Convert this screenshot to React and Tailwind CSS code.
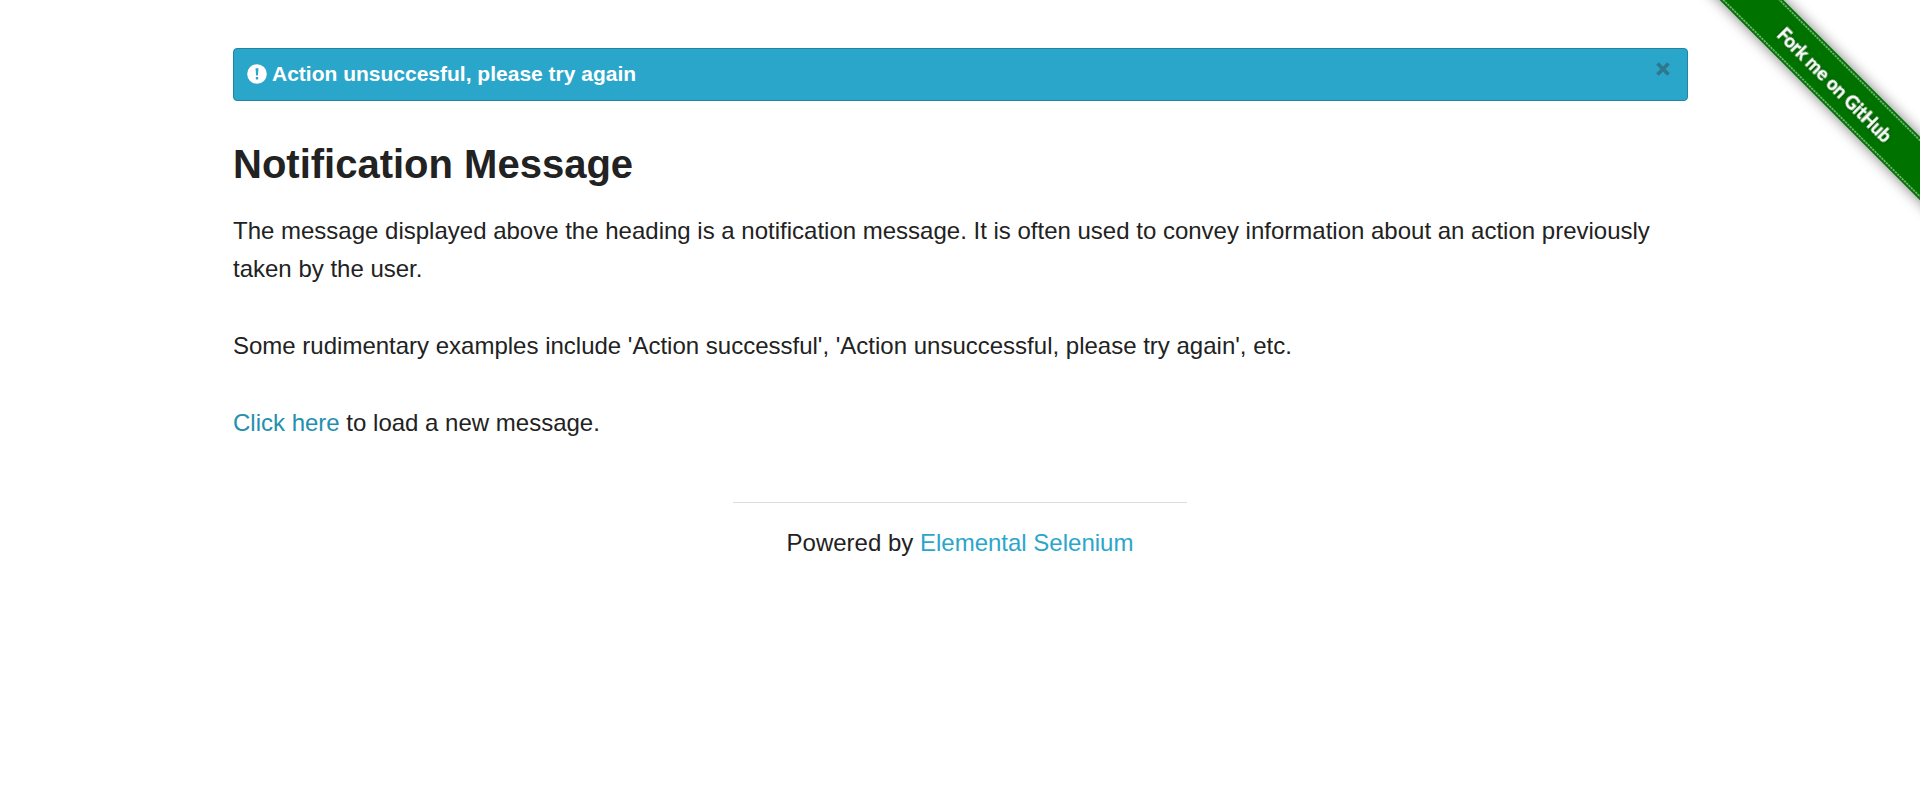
import React, { useState } from "react";

function AlertIcon() {
  return (
    <svg viewBox="0 0 20 20" className="h-5 w-5 shrink-0" aria-hidden="true">
      <circle cx="10" cy="10" r="9.8" fill="#fff" />
      <path d="M8.5 4.2h3l-.6 7.4H9.1z" fill="#2ba6cb" />
      <rect x="8.8" y="13" width="2.4" height="2.4" rx=".3" fill="#2ba6cb" />
    </svg>
  );
}

function CloseIcon() {
  return (
    <svg viewBox="0 0 14 14" className="h-3.5 w-3.5" aria-hidden="true">
      <path d="M1.5 1.5l11 11M12.5 1.5l-11 11" stroke="#333" strokeWidth="3.8" />
    </svg>
  );
}

function ForkRibbon() {
  return (
    <a href="#fork" aria-label="Fork me on GitHub" className="absolute top-0 right-0">
      <svg viewBox="0 0 224 224" className="block h-56 w-56">
        <defs>
          <filter id="ribbon-shadow" x="-20%" y="-60%" width="140%" height="220%">
            <feGaussianBlur stdDeviation="7" />
          </filter>
          <filter id="text-shadow" x="-20%" y="-60%" width="140%" height="220%">
            <feDropShadow dx="0" dy="0" stdDeviation="1.5" floodColor="#000" floodOpacity="0.5" />
          </filter>
        </defs>
        <g transform="translate(139.5 84) rotate(45)">
          <rect x="-200" y="-22.5" width="400" height="45" fill="#000" opacity="0.5" filter="url(#ribbon-shadow)" />
          <rect x="-200" y="-22.5" width="400" height="45" fill="#007200" />
          <path d="M-200-19.8h400M-200 19.8h400" stroke="#6ab06a" strokeWidth="1.8" strokeDasharray="2.4 .8" />
          <text y="8" textAnchor="middle" fill="#fff" stroke="#fff" strokeWidth=".3" fontFamily="Lato, sans-serif" fontSize="18" fontWeight="700" filter="url(#text-shadow)">
            Fork me on GitHub
          </text>
        </g>
      </svg>
    </a>
  );
}

export default function App() {
  const [open, setOpen] = useState(true);
  return (
    <div className="relative overflow-x-clip bg-white font-['Liberation_Sans',Arial,sans-serif] text-2xl text-[#222]">
      <ForkRibbon />
      <div className="mx-auto max-w-[1500px] pt-12 pr-[22px] pl-[23px]">
        {open && (
          <div role="alert" className="flex items-start justify-between rounded border border-[#2284a1] bg-[#2ba6cb] pt-[11px] pr-[15px] pb-3 pl-[13px] text-white">
            <p className="flex items-center gap-[5px] text-[21px] leading-7 font-bold">
              <AlertIcon />
              Action unsuccesful, please try again
            </p>
            <button type="button" aria-label="Close" onClick={() => setOpen(false)} className="p-0.5 opacity-40">
              <CloseIcon />
            </button>
          </div>
        )}
        <main>
          <h1 className="mt-[35px] mb-5 text-[40px] leading-[56px] font-bold">Notification Message</h1>
          <p className="leading-[38px]">
            The message displayed above the heading is a notification message. It is often used to convey information about an action previously taken by the user.
          </p>
          <p className="mt-[39px] leading-[38px]">
            Some rudimentary examples include 'Action successful', 'Action unsuccessful, please try again', etc.
          </p>
          <p className="mt-[39px] leading-[38px]">
            <a href="#message" className="text-[#258faf]">Click here</a> to load a new message.
          </p>
        </main>
      </div>
      <footer className="mx-auto mt-[60px] w-full max-w-[454px] border-t border-[#ddd] pt-[21px] text-center leading-[38px]">
        Powered by <a href="#selenium" className="text-[#2ba6cb]">Elemental Selenium</a>
      </footer>
    </div>
  );
}
